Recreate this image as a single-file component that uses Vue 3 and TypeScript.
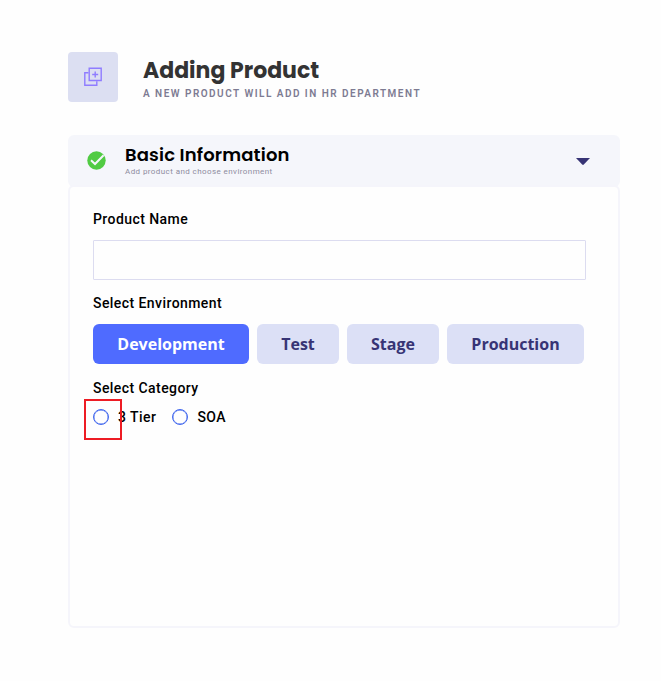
<script setup lang="ts">
import { ref } from 'vue'

const productName = ref('')
const environments: string[] = ['Development', 'Test', 'Stage', 'Production']
const selectedEnvironment = ref('Development')
const categories: string[] = ['3 Tier', 'SOA']
const selectedCategory = ref('')
</script>

<template>
  <main class="page">
    <header class="page-header">
      <div class="badge">
        <svg width="18" height="20" viewBox="0 0 18 20" fill="none" stroke="#8f7dff" stroke-width="1.4">
          <path d="M4.5 5.7H.8v12.5h12v-3.9" />
          <path d="M5.2 1.2h12v12.3h-12z" />
          <path d="M11.2 4.5v6M8.2 7.5h6" />
        </svg>
      </div>
      <div>
        <h1 class="title">Adding Product</h1>
        <p class="subtitle">A NEW PRODUCT WILL ADD IN HR DEPARTMENT</p>
      </div>
    </header>

    <section>
      <div class="panel-head">
        <svg class="check" width="19" height="19" viewBox="0 0 19 19">
          <circle cx="9.5" cy="9.5" r="9.2" fill="#51cb43" />
          <path d="M4 9.3l4 3.7 8.6-8.8" fill="none" stroke="#f5f6fb" stroke-width="2" />
        </svg>
        <div class="panel-text">
          <h2 class="panel-title">Basic Information</h2>
          <p class="panel-note">Add product and choose environment</p>
        </div>
        <svg class="caret" width="14" height="7" viewBox="0 0 14 7">
          <path d="M0 0h14L7.8 6.6q-.8.7-1.6 0z" fill="#373475" />
        </svg>
      </div>

      <div class="panel-body">
        <label class="label" for="product-name">Product Name</label>
        <input id="product-name" v-model="productName" class="input" type="text" />

        <div class="label env-label">Select Environment</div>
        <div class="environments">
          <button
            v-for="env in environments"
            :key="env"
            type="button"
            :class="['env', env.toLowerCase(), { active: env === selectedEnvironment }]"
            @click="selectedEnvironment = env"
          >{{ env }}</button>
        </div>

        <div class="label cat-label">Select Category</div>
        <div class="categories">
          <label v-for="(cat, i) in categories" :key="cat" class="category">
            <input v-model="selectedCategory" class="radio" type="radio" name="category" :value="cat" />
            <span class="category-name">{{ cat }}</span>
            <span v-if="i === 0" class="highlight"></span>
          </label>
        </div>
      </div>
    </section>
  </main>
</template>

<style>
body {
  background: #fefefe;
}
</style>

<style scoped>
* {
  box-sizing: border-box;
}
.page {
  width: 661px;
  height: 681px;
  padding: 52px 41px 0 68px;
  font-family: Roboto, "Liberation Sans", sans-serif;
}
.page-header {
  display: flex;
  gap: 25px;
  height: 83px;
}
.badge {
  display: flex;
  align-items: center;
  justify-content: center;
  width: 50px;
  height: 50px;
  border-radius: 4px;
  background: #dcdff2;
}
h1,
h2,
p {
  margin: 0;
  white-space: nowrap;
}
.title {
  padding-top: 5px;
  font: 700 22px/28px Poppins, Inter, sans-serif;
  color: #333;
}
.subtitle {
  margin-top: 2px;
  font-size: 10px;
  font-weight: 600;
  line-height: 13px;
  letter-spacing: 1.48px;
  color: #7d7b92;
}
.panel-head {
  display: flex;
  align-items: center;
  height: 52px;
  padding: 0 30px 0 19px;
  border-radius: 6px;
  background: #f5f6fb;
}
.check {
  margin-bottom: 1px;
}
.panel-text {
  flex: 1;
  margin: 0 0 3px 19px;
}
.panel-title {
  font: 600 18px/24px Poppins, Inter, sans-serif;
  letter-spacing: 0.15px;
  color: #000;
}
.panel-note {
  font-size: 8px;
  line-height: 10px;
  letter-spacing: 0.42px;
  color: #8e8ca0;
}
.panel-body {
  height: 443px;
  margin-top: -2px;
  padding: 22px 32px 0 23px;
  border: 2px solid #f5f5fb;
  border-radius: 6px;
  background: #fefefe;
}
.label {
  display: block;
  font-size: 14px;
  font-weight: 500;
  line-height: 20px;
  letter-spacing: 0.43px;
  color: #000;
}
.input {
  display: block;
  width: 493px;
  height: 40px;
  margin-top: 11px;
  padding: 0 12px;
  border: 1px solid #dcdcf0;
  border-radius: 1px;
  background: #fefefe;
  font-size: 14px;
  outline: none;
}
.env-label {
  margin-top: 13px;
}
.environments {
  display: flex;
  gap: 8px;
  margin-top: 11px;
}
.env {
  height: 40px;
  padding: 0;
  border: 0;
  border-radius: 6px;
  background: #dce0f6;
  color: #373475;
  font: 700 16px/40px "Open Sans", sans-serif;
}
.env.active {
  background: #4f6bff;
  color: #fff;
}
.development {
  width: 156px;
}
.test {
  width: 82px;
}
.stage {
  width: 92px;
}
.production {
  width: 137px;
}
.cat-label {
  margin-top: 14px;
}
.categories {
  display: flex;
  gap: 16px;
  margin-top: 9px;
}
.category {
  position: relative;
  display: flex;
  align-items: center;
  height: 20px;
}
.radio {
  appearance: none;
  width: 16px;
  height: 16px;
  margin: 0 9px 0 0;
  border: 1px solid #4167ee;
  border-radius: 50%;
  box-shadow: inset 0 0 0 0.4px #4167ee;
}
.radio:checked {
  background: #4167ee;
  box-shadow: inset 0 0 0 3px #fff;
}
.category-name {
  font-size: 14px;
  font-weight: 500;
  line-height: 20px;
  letter-spacing: 0.45px;
  color: #000;
}
.highlight {
  position: absolute;
  left: -9px;
  top: -8px;
  width: 38px;
  height: 41px;
  border: 2px solid #ed1c24;
  pointer-events: none;
}
</style>
